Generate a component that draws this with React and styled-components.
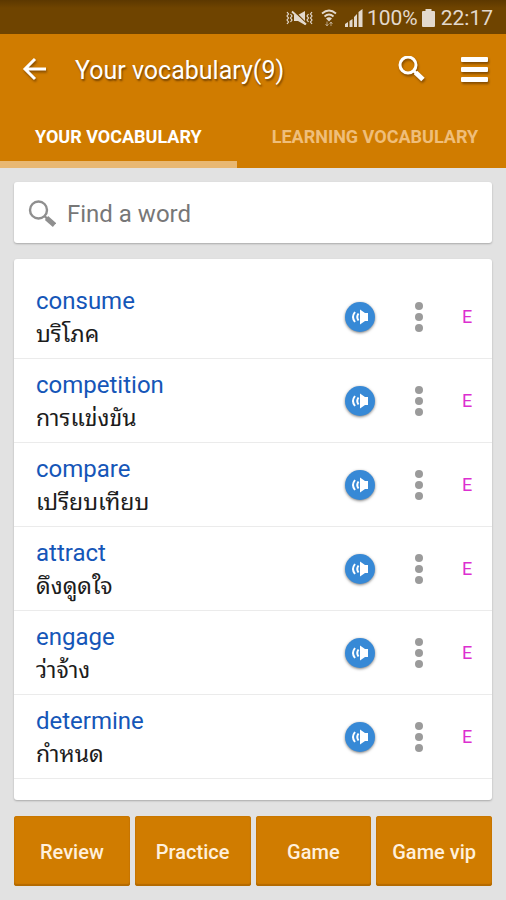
import React from "react";
import styled, { createGlobalStyle } from "styled-components";

const GlobalStyle = createGlobalStyle`
  * {
    box-sizing: border-box;
  }
  body {
    margin: 0;
    background: #e2e2e2;
    font-family: Roboto, "Noto Sans", sans-serif;
  }
  button {
    border: 0;
    padding: 0;
    background: none;
    font-family: inherit;
    cursor: pointer;
  }
`;

const Screen = styled.div`
  display: flex;
  flex-direction: column;
  min-height: 100vh;
`;

const StatusBar = styled.div`
  display: flex;
  align-items: center;
  justify-content: flex-end;
  height: 34px;
  padding: 2px 13px 0 0;
  background: linear-gradient(#5c3800, #6f4400 8px);
  color: #e3d9cd;
  font-size: 21px;

  svg {
    display: block;
    flex: none;
  }
`;

const StatusIcons = styled.div`
  display: flex;
  align-items: center;
  gap: 8px;
  margin-right: 4px;
`;

const Battery = styled.svg`
  margin: 0 6px 0 4px;
`;

const Header = styled.header`
  background: #d07c00;
`;

const Toolbar = styled.div`
  display: flex;
  align-items: center;
  height: 72px;
  padding: 0 18px 0 22px;
`;

const Title = styled.h1`
  flex: 1;
  margin: 0 0 0 27px;
  padding-top: 2px;
  color: #fff;
  font-size: 25px;
  font-weight: 400;
  line-height: 32px;
  text-shadow: 1px 2px 2px rgba(60, 30, 0, 0.6);
`;

const IconButton = styled.button`
  display: flex;
  color: #fff;

  svg {
    filter: drop-shadow(1px 2px 1px rgba(60, 30, 0, 0.5));
  }
  & + & {
    margin-left: 34px;
  }
`;

const Tabs = styled.nav`
  display: flex;
  height: 62px;
  overflow: hidden;
`;

const Tab = styled.button`
  flex: none;
  padding: 0 35px;
  border-top: 6px solid transparent;
  border-bottom: 7px solid ${({ $active }) => ($active ? "#e8b873" : "transparent")};
  color: ${({ $active }) => ($active ? "#fff" : "#efbe7a")};
  font-size: 18px;
  font-weight: 700;
  white-space: nowrap;
`;

const Content = styled.main`
  display: flex;
  flex: 1;
  flex-direction: column;
  gap: 16px;
  padding: 14px;
`;

const SearchBox = styled.label`
  display: flex;
  align-items: center;
  gap: 11px;
  height: 61px;
  padding: 2px 14px 0;
  border-radius: 3px;
  background: #fff;
  box-shadow: 0 1px 2px rgba(0, 0, 0, 0.25);
  color: #8f8f8f;

  input {
    flex: 1;
    min-width: 0;
    padding: 0;
    border: 0;
    outline: none;
    background: none;
    color: #333;
    font-family: inherit;
    font-size: 24px;
  }
  input::placeholder {
    color: #777;
    opacity: 1;
  }
`;

const WordList = styled.ul`
  flex: 1;
  margin: 0;
  padding: 16px 0 21px;
  border-radius: 3px;
  background: #fff;
  box-shadow: 0 1px 2px rgba(0, 0, 0, 0.25);
  list-style: none;
`;

const WordRow = styled.li`
  display: flex;
  align-items: center;
  height: 84px;
  padding: 0 18px 0 22px;
  border-bottom: 1px solid #ebebeb;
`;

const WordText = styled.div`
  flex: 1;
  min-width: 0;
`;

const Word = styled.div`
  color: #1556b8;
  font-size: 24px;
  line-height: 30px;
`;

const Meaning = styled.div`
  color: #1c1c1c;
  font-family: "Noto Sans Thai Looped", "Noto Looped Thai", Loma, Garuda, Waree, "Noto Sans Thai", Roboto, sans-serif;
  font-size: 23px;
  line-height: 32px;
`;

const SpeakButton = styled.button`
  display: flex;
  align-items: center;
  justify-content: center;
  width: 30px;
  height: 30px;
  border-radius: 50%;
  background: #3789d6;
  box-shadow: 0 1px 3px rgba(0, 0, 0, 0.5);
  color: #fff;
`;

const MoreButton = styled.button`
  display: flex;
  margin: 0 36px 0 39px;
  color: #9b9b9b;
`;

const Level = styled.span`
  width: 14px;
  color: #dc2fd0;
  font-size: 18px;
  text-align: center;
`;

const Actions = styled.div`
  display: grid;
  grid-template-columns: repeat(4, 1fr);
  gap: 5px;
`;

const ActionButton = styled.button`
  height: 70px;
  padding-top: 2px;
  border-radius: 3px;
  background: #d07c00;
  box-shadow: inset 0 -2px 1px #b36a00, inset 0 0 1px 1px #c87700;
  color: #fff0dd;
  font-size: 20px;
  font-weight: 500;
  white-space: nowrap;
`;

const words = [
  { word: "consume", meaning: "บริโภค" },
  { word: "competition", meaning: "การแข่งขัน" },
  { word: "compare", meaning: "เปรียบเทียบ" },
  { word: "attract", meaning: "ดึงดูดใจ" },
  { word: "engage", meaning: "ว่าจ้าง" },
  { word: "determine", meaning: "กำหนด" },
];

const actions = ["Review", "Practice", "Game", "Game vip"];

const VibrateIcon = () => (
  <svg width="27" height="18" viewBox="0 0 27 18" fill="none" stroke="currentColor">
    <path
      d="M1 3l1.500 2L1 7l1.500 2L1 11l1.500 2L1 15M4.500 5L6 7 4.500 9 6 11l-1.500 2M26 3l-1.500 2L26 7l-1.500 2 1.500 2-1.500 2 1.500 2M22.500 5L21 7l1.500 2-1.500 2 1.500 2"
      strokeWidth="1.2"
    />
    <path d="M8 6h4l7-4v14l-7-4H8z" fill="currentColor" stroke="none" />
    <path d="M7 1l14 14" stroke="#6f4400" strokeWidth="1.5" />
    <path d="M6 2.500l14 13" strokeWidth="1.8" />
  </svg>
);

const WifiIcon = () => (
  <svg width="16" height="18" viewBox="0 0 16 18" fill="none" stroke="currentColor">
    <path d="M1 4.500q7-6 14 0M3.500 7.500q4.500-4 9 0" strokeWidth="1.8" />
    <path d="M5 9.500q3-2.500 6 0L8 12.500z" fill="currentColor" stroke="none" />
    <path d="M6 12.500v4M4.500 15L6 17l1.500-2M10 17v-4M8.500 15l1.500-2 1.500 2" strokeWidth="1" opacity="0.6" />
  </svg>
);

const SignalIcon = () => (
  <svg width="18" height="18" viewBox="0 0 18 18" fill="currentColor">
    <path d="M0 18v-3l3-2v5zM4.500 18v-6l3-2v8zM9 18V8l3-3v13zM13.500 18V3l4-3v18z" />
  </svg>
);

const App = () => (
  <>
    <GlobalStyle />
    <Screen>
      <StatusBar>
        <StatusIcons>
          <VibrateIcon />
          <WifiIcon />
          <SignalIcon />
        </StatusIcons>
        100%
        <Battery width="13" height="18" viewBox="0 0 13 18" fill="currentColor">
          <path d="M3.500 0h6v2H12q1 0 1 1v14q0 1-1 1H1q-1 0-1-1V3q0-1 1-1h2.500z" />
        </Battery>
        22:17
      </StatusBar>

      <Header>
        <Toolbar>
          <IconButton type="button" aria-label="Back">
            <svg width="26" height="26" viewBox="0 0 26 26" fill="none" stroke="currentColor" strokeWidth="3">
              <path d="M24 12H3M13 2L3 12l10 10" />
            </svg>
          </IconButton>
          <Title>Your vocabulary(9)</Title>
          <IconButton type="button" aria-label="Search">
            <svg width="28" height="28" viewBox="0 0 28 28" fill="none" stroke="currentColor">
              <circle cx="10" cy="9" r="8" strokeWidth="3" />
              <path d="M15.500 14.500l3 3" strokeWidth="3" />
              <path d="M17.500 16.500l7.500 7" strokeWidth="5" />
            </svg>
          </IconButton>
          <IconButton type="button" aria-label="Menu">
            <svg width="28" height="28" viewBox="0 0 28 28" fill="currentColor">
              <rect x="1" y="1" width="27" height="5" rx="1" />
              <rect x="1" y="11" width="27" height="5" rx="1" />
              <rect x="1" y="21" width="27" height="5" rx="1" />
            </svg>
          </IconButton>
        </Toolbar>
        <Tabs>
          <Tab type="button" $active>
            YOUR VOCABULARY
          </Tab>
          <Tab type="button">LEARNING VOCABULARY</Tab>
        </Tabs>
      </Header>

      <Content>
        <SearchBox>
          <svg width="28" height="28" viewBox="0 0 28 28" fill="none" stroke="currentColor">
            <circle cx="10.500" cy="10" r="8.500" strokeWidth="2.400" />
            <path d="M16.500 16l3 3" strokeWidth="2.400" />
            <path d="M18.500 18l8 7" strokeWidth="5" />
          </svg>
          <input type="text" placeholder="Find a word" aria-label="Find a word" />
        </SearchBox>

        <WordList>
          {words.map(({ word, meaning }) => (
            <WordRow key={word}>
              <WordText>
                <Word>{word}</Word>
                <Meaning lang="th">{meaning}</Meaning>
              </WordText>
              <SpeakButton type="button" aria-label={`Listen to ${word}`}>
                <svg width="18" height="16" viewBox="0 0 18 16" fill="none" stroke="currentColor">
                  <path d="M17 4h-3L9 .5v15l5-3.500h3z" fill="currentColor" stroke="none" />
                  <path d="M7.500 4.500q-2.500 3.500 0 7M4 3q-4 5 0 10" strokeWidth="2" />
                </svg>
              </SpeakButton>
              <MoreButton type="button" aria-label={`Options for ${word}`}>
                <svg width="10" height="30" viewBox="0 0 10 30" fill="currentColor">
                  <circle cx="5" cy="4" r="4" />
                  <circle cx="5" cy="15" r="4" />
                  <circle cx="5" cy="26" r="4" />
                </svg>
              </MoreButton>
              <Level>E</Level>
            </WordRow>
          ))}
        </WordList>

        <Actions>
          {actions.map((label) => (
            <ActionButton key={label} type="button">
              {label}
            </ActionButton>
          ))}
        </Actions>
      </Content>
    </Screen>
  </>
);

export default App;
